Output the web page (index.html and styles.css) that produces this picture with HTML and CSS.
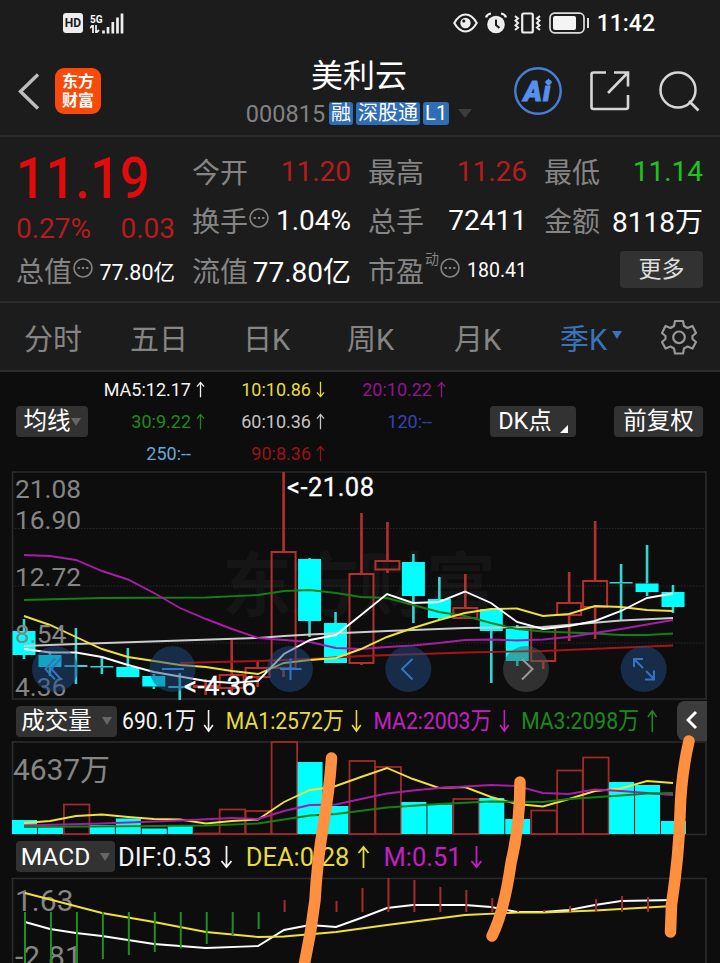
FILE: index.html
```html
<!DOCTYPE html>
<html lang="zh-CN">
<head>
  <meta charset="UTF-8">
  <meta name="viewport" content="width=device-width, initial-scale=1.0">
  <title>美利云 000815</title>
  <link rel="stylesheet" href="styles.css">
</head>
<body>
  <svg class="defs" width="0" height="0">
    <symbol id="up" viewBox="0 0 12 24"><path d="M6 23V2M1 8L6 2L11 8" fill="none" stroke="currentColor" stroke-width="1.8"/></symbol>
    <symbol id="down" viewBox="0 0 12 24"><path d="M6 1V22M1 16L6 22L11 16" fill="none" stroke="currentColor" stroke-width="1.8"/></symbol>
    <symbol id="dots" viewBox="0 0 20 20"><circle cx="10" cy="10" r="9" fill="none" stroke="currentColor" stroke-width="1.6"/><path d="M4.6 10h2.2M8.9 10h2.2M13.2 10h2.2" stroke="currentColor" stroke-width="2"/></symbol>
  </svg>

  <div class="screen">
    <div class="status">
      <span class="hd">HD</span>
      <div class="net">
        <span>5G</span>
        <svg width="10" height="8" viewBox="0 0 10 8"><path d="M0 3L3 0V8M6 0V8L9 5" fill="none" stroke="#eee" stroke-width="1.8"/></svg>
      </div>
      <svg class="signal" width="22" height="21" viewBox="0 0 22 21"><path d="M1.5 17.5V20.5M6 14V20.5M10.8 9V20.5M15.5 4.5V20.5M20 0.5V20.5" stroke="#eee" stroke-width="2.7"/></svg>
      <div class="status-right">
        <svg width="25" height="20" viewBox="0 0 25 20"><path d="M1.3 10Q6 1.5 12.5 1.5T23.7 10Q19 18.5 12.5 18.5T1.3 10Z" fill="none" stroke="#eee" stroke-width="2.1"/><circle cx="12.5" cy="10" r="5.2" fill="#eee"/><circle cx="10.8" cy="8" r="1.6" fill="#1c1c1c"/></svg>
        <svg width="22" height="22" viewBox="0 0 22 22"><circle cx="11" cy="12.5" r="8.8" fill="#eee"/><path d="M11 7.5V13L14.5 16" fill="none" stroke="#1c1c1c" stroke-width="2"/><path d="M1 5.5Q2 2 6 1.5M21 5.5Q20 2 16 1.5" fill="none" stroke="#eee" stroke-width="2.2"/></svg>
        <svg width="27" height="22" viewBox="0 0 27 22"><rect x="8.2" y="1.5" width="10.6" height="19" rx="1.5" fill="none" stroke="#eee" stroke-width="2.2"/><path d="M1 4L4 6.5L1.5 8.5L4 11L1.5 13.5L4 15.5L1 18M26 4L23 6.5L25.5 8.5L23 11L25.5 13.5L23 15.5L26 18" fill="none" stroke="#eee" stroke-width="2"/></svg>
        <svg class="battery" width="41" height="22" viewBox="0 0 41 22"><rect x="1" y="1.2" width="34" height="19.6" rx="4.5" fill="none" stroke="#ddd" stroke-width="1.7"/><rect x="4" y="4" width="23" height="14" rx="2" fill="#f4f4f4"/><path d="M39 6V16" stroke="#ddd" stroke-width="2"/></svg>
        <span class="clock">11:42</span>
      </div>
    </div>

    <header class="header">
      <svg class="back" width="22" height="37" viewBox="0 0 22 37"><path d="M20 1.5L2.5 18.5L20 35.5" fill="none" stroke="#bdbdbd" stroke-width="3.4"/></svg>
      <div class="logo">东方<br>财富</div>
      <div class="title">
        <h1>美利云</h1>
        <div class="code">
          <span class="num">000815</span>
          <span class="tag">融</span>
          <span class="tag">深股通</span>
          <span class="tag">L1</span>
          <i class="tri"></i>
        </div>
      </div>
      <div class="ai">
        <svg width="48" height="48" viewBox="0 0 48 48">
          <circle cx="24" cy="24" r="22.7" fill="none" stroke="#477fd6" stroke-width="2.400"/>
          <text x="9.500" y="33.500" textLength="27">Ai</text>
          <path d="M34.500 11L35.700 14L38.500 15L35.700 16.200L34.500 19L33.300 16.200L30.500 15L33.300 14Z" fill="#5590ee"/>
        </svg>
      </div>
      <svg class="share" width="40" height="40" viewBox="0 0 40 40"><path d="M16 1.5H3.5Q1.5 1.5 1.5 3.5V36Q1.5 38 3.5 38H36Q38 38 38 36V24M24 1.5H38V15.500M37.500 2L18 22" fill="none" stroke="#d6d6d6" stroke-width="2.600"/></svg>
      <svg class="search" width="41" height="41" viewBox="0 0 41 41"><circle cx="19" cy="19" r="17.500" fill="none" stroke="#d6d6d6" stroke-width="2.500"/><path d="M30 30L39.500 39.500" stroke="#d6d6d6" stroke-width="2.600"/></svg>
    </header>

    <section class="quote">
      <div class="price">11.19</div>
      <div class="pair change"><span>0.27%</span><span>0.03</span></div>
      <div class="pair cell-open"><label>今开</label><span class="red">11.20</span></div>
      <div class="pair"><label>最高</label><span class="red">11.26</span></div>
      <div class="pair"><label>最低</label><span class="lime">11.14</span></div>
      <div class="pair cell-turn"><label>换手<svg class="info"><use href="#dots"/></svg></label><span>1.04%</span></div>
      <div class="pair"><label>总手</label><span>72411</span></div>
      <div class="pair"><label>金额</label><span>8118万</span></div>
      <div class="pair"><label>总值<svg class="info"><use href="#dots"/></svg></label><span class="mid">77.80亿</span></div>
      <div class="pair"><label>流值</label><span>77.80亿</span></div>
      <div class="pair"><label>市盈<sup>动</sup><svg class="info"><use href="#dots"/></svg></label><span class="small">180.41</span></div>
      <button class="more">更多</button>
    </section>

    <nav class="tabs">
      <span>分时</span>
      <span>五日</span>
      <span>日K</span>
      <span>周K</span>
      <span>月K</span>
      <span class="active">季K<i class="tri"></i></span>
      <svg class="gear" width="36" height="36" viewBox="0 0 36 36"><path d="M14 2H22L23 7L26.500 9L31.500 7L35 14L31.500 17V20L35 23L31.500 29.500L26.500 27.500L23 29.500L22 34.500H14L13 29.500L9.500 27.500L4.500 29.500L1 23L4.500 20V17L1 14L4.500 7L9.500 9L13 7Z" fill="none" stroke="#98989a" stroke-width="2.200" stroke-linejoin="round"/><circle cx="18" cy="18.300" r="5.800" fill="none" stroke="#98989a" stroke-width="2.200"/></svg>
    </nav>

    <section class="averages">
      <button class="chip">均线<i class="tri"></i></button>
      <div class="ma-grid">
        <span class="white">MA5:12.17<svg><use href="#up"/></svg></span>
        <span class="yellow">10:10.86<svg><use href="#down"/></svg></span>
        <span class="purple">20:10.22<svg><use href="#up"/></svg></span>
        <span class="green">30:9.22<svg><use href="#up"/></svg></span>
        <span class="grey">60:10.36<svg><use href="#up"/></svg></span>
        <span class="blue flat">120:--</span>
        <span class="sky flat">250:--</span>
        <span class="darkred">90:8.36<svg><use href="#up"/></svg></span>
      </div>
      <button class="chip dk">DK点<i></i></button>
      <button class="chip">前复权</button>
    </section>

    <svg class="chart" id="kline" width="720" height="230" viewBox="0 471 720 230">
      <text class="watermark" x="222" y="611" textLength="274">东方财富</text>
      <path class="frame" d="M12.500 472H706V699H12.500Z"/>
      <path class="grid" d="M12 528.500H706M12 586H706M12 643H706"/>
      <g id="candles"></g>
      <polyline class="l-red" points="180,663 258,661 310,659 361,656 465,652.500 543,651 673,645.500"/>
      <polyline class="l-grey" points="24,646 76,644 258,638 284,636 310,634.500 387,631 465,628 543,627 621,620.500 673,618"/>
      <polyline class="l-green" points="24,600 102,598 206,597.500 258,595 284,591 310,590 336,593 361,597 387,598 413,605 439,612 465,616 491,623 517,629 543,631.500 595,633.500 621,635 647,635 673,633.500"/>
      <polyline class="l-purple" points="24,555 50,556 76,560 102,571 128,579.500 154,593 180,608 206,619 232,629 258,638 284,640 310,642 336,648 361,649 387,647 413,645.500 439,643 465,640 491,639.500 517,640.500 543,639.500 569,637 621,629 673,620"/>
      <polyline class="l-yellow" points="24,616 50,625 76,637 102,649 128,657 154,661 180,665 206,667 232,671 258,674 284,663 310,660 336,658 361,649 387,637 413,628 439,620 465,613 491,609 517,608.500 543,616 569,614 595,606 621,607 647,610 673,611"/>
      <polyline class="l-white" points="24,649 50,652.500 76,652.500 102,657 128,665 154,672 180,676.500 206,681 232,683 258,681 284,654 310,640 336,635 361,615 387,594 413,603 439,602 465,591.500 491,603 517,622 543,629 569,626 595,621 621,611 647,598 673,593.500"/>
      <g class="scale">
        <text x="15" y="498">21.08</text>
        <text x="15" y="529">16.90</text>
        <text x="15" y="586">12.72</text>
        <text x="15" y="643">8.54</text>
        <text x="15" y="696">4.36</text>
      </g>
      <g class="pads">
        <circle cx="55" cy="669" r="23"/>
        <circle cx="172.500" cy="669" r="23"/>
        <circle cx="290" cy="669" r="23"/>
        <circle cx="408.300" cy="669" r="23"/>
        <circle class="off" cx="526" cy="669" r="23"/>
        <circle cx="643.700" cy="669" r="23"/>
        <path d="M55 658.500L45.500 669L55 679.500M61 658.500L51.500 669L61 679.500M162 669H184M280 669H301.500M290.500 658.500V680M412.500 659L402 669L412.500 679.500"/>
        <path d="M634 667V659H643M634 659L643 668M646 671L654 679M654 670.500V679.500H645"/>
        <path class="off-line" d="M522 659L532.500 669L522 679.500"/>
      </g>
      <text class="mark" x="287" y="496" textLength="87">&lt;-21.08</text>
      <text class="mark" x="184" y="695" textLength="72">&lt;-4.36</text>
    </svg>

    <div class="bar volume-bar">
      <button class="chip">成交量<i class="tri"></i></button>
      <div class="readout narrow">
        <span class="white">690.1万<svg><use href="#down"/></svg></span>
        <span class="yellow">MA1:2572万<svg><use href="#down"/></svg></span>
        <span class="purple2">MA2:2003万<svg><use href="#down"/></svg></span>
        <span class="green">MA3:2098万<svg><use href="#up"/></svg></span>
      </div>
      <button class="collapse"><svg width="12" height="20" viewBox="0 0 12 20"><path d="M10 2L2 10L10 18" fill="none" stroke="#fff" stroke-width="3"/></svg></button>
    </div>

    <svg class="chart" id="volume" width="720" height="95" viewBox="0 741 720 95">
      <path class="frame" d="M12.500 742H706V834.500H12.500Z"/>
      <g id="bars"></g>
      <polyline class="l-yellow" points="24,823 50,821 76,816 102,814.500 128,817 154,819 180,819.500 206,823.500 232,821 258,819.500 284,802 310,790 333,787 361,777 387,768 413,779 439,788 465,787 491,797 517,804 543,806.500 569,799 595,791 621,788.500 647,781 673,783"/>
      <polyline class="l-purple" points="24,825.500 102,823.500 180,820.500 232,818 258,819 284,811 310,805 336,804.500 361,799 387,793.500 413,790.500 439,788 491,785 517,786 543,793 569,794 595,789.500 621,791 647,793 673,795"/>
      <polyline class="l-green" points="24,827 154,826 206,825.500 258,823.500 310,815.500 336,814 387,807.500 439,804 491,801.500 543,802 569,799 621,795.500 647,793.500 673,793"/>
      <text class="scale big" x="13" y="780" textLength="97">4637万</text>
    </svg>

    <div class="bar macd-bar">
      <button class="chip">MACD<i class="tri"></i></button>
      <div class="readout">
        <span class="white">DIF:0.53<svg><use href="#down"/></svg></span>
        <span class="yellow">DEA:0.28<svg><use href="#up"/></svg></span>
        <span class="purple2">M:0.51<svg><use href="#down"/></svg></span>
      </div>
    </div>

    <svg class="chart" id="macd" width="720" height="86" viewBox="0 877 720 86">
      <path class="frame" d="M12.500 970V878.500H706V970"/>
      <text class="scale big" x="15" y="911">1.63</text>
      <text class="scale big" x="15" y="967">-2.81</text>
      <polyline class="l-white" points="25,922 50,929 76,933 102,936 128,940 154,944 206,948 258,946 284,930 310,925 336,927 361,918 387,908 413,905 465,905 491,907 517,912 543,912 569,910 595,905 621,901 673,900"/>
      <polyline class="l-yellow" points="25,893 102,913 154,922 206,932 258,937 284,936.500 336,932 387,925 465,915 517,912.500 543,912.500 595,910.500 673,906"/>
      <g id="sticks"></g>
    </svg>

    <svg class="strokes" width="720" height="963" viewBox="0 0 720 963">
      <path d="M331.500 758Q330 785 323.500 824T315 900Q311 935 303 970"/>
      <path d="M520 782Q520 825 511 863Q504 912 492 936"/>
      <path d="M689 741Q681 775 680 815T671.500 905L670.500 932"/>
    </svg>
  </div>

  <script>
    const STEP = 25.96;
    const RED = '#b5302c';
    const CYAN = '#00ffff';
    const WICK = '#35d5d6';

    // [rising, high, top, bottom, low]
    const candles = [
      [0, 619, 631, 655, 659], [0, 651, 655, 667, 676], [0, 628, 665, 667, 684],
      [0, 657, 666, 667.5, 674], [0, 648, 667, 677, 677], [0, 674, 676, 686.5, 689],
      [0, 673, 686, 688, 700], [1, 679, 686, 687, 695], [1, 640, 675, 688, 693],
      [1, 662, 668, 677, 687], [1, 472, 552, 668, 677], [0, 558, 559, 621, 637],
      [0, 612, 623, 663, 663], [1, 513, 574, 663, 665], [1, 522, 561, 569.5, 573],
      [0, 554, 562, 596, 623], [0, 577, 599, 618, 620], [1, 574, 608, 618, 618],
      [0, 608, 609, 631, 683], [0, 625, 629, 661, 666], [1, 626, 628, 661, 669],
      [1, 572, 603, 615, 641], [1, 521, 581, 607, 639], [0, 564, 582, 583.5, 621],
      [0, 545, 583.5, 592, 596], [0, 585, 592, 607, 613]
    ];

    document.getElementById('candles').innerHTML = candles.map(([up, high, top, bottom, low], i) => {
      const x = 24 + i * STEP;
      const wick = `<path d="M${x} ${high}V${top}M${x} ${bottom}V${low}" stroke="${up ? RED : WICK}" stroke-width="2.6"/>`;
      if (up) {
        return wick + `<rect x="${x - 12}" y="${top}" width="24" height="${bottom - top}" fill="none" stroke="${RED}" stroke-width="2"/>`;
      }
      return wick + `<rect x="${x - 11.5}" y="${top}" width="23" height="${bottom - top}" fill="${bottom - top < 3 ? WICK : CYAN}"/>`;
    }).join('');

    // [rising, top]
    const volumes = [
      [0, 820], [0, 826], [1, 804.5], [0, 825], [0, 818.5], [0, 828.5], [0, 825], [1, 833.5], [1, 809.5],
      [1, 811], [1, 742], [0, 762], [0, 806], [1, 761], [1, 767], [0, 802], [0, 804.5], [1, 799],
      [0, 798], [0, 819], [1, 810.5], [1, 770.5], [1, 757.5], [0, 782], [0, 785], [0, 821]
    ];

    document.getElementById('bars').innerHTML = volumes.map(([up, top], i) => {
      const x = 12 + i * STEP;
      return up
        ? `<rect x="${x}" y="${top}" width="25.500" height="${834 - top}" fill="none" stroke="#a02a28" stroke-width="1.8"/>`
        : `<rect x="${x}" y="${top}" width="25" height="${834 - top}" fill="${CYAN}"/>`;
    }).join('');

    const sticks = [970, 970, 970, 959, 955, 952, 948.5, 944, 935, 929, 900, 912, 901,
      888, 878, 880, 887, 890, 898, 910.5, 910, 906, 899, 896, 897];

    document.getElementById('sticks').innerHTML = sticks.map((y, i) =>
      `<path d="M${25 + i * STEP} 912V${y}" stroke="${y > 912 ? '#1f8f1f' : '#a62c2a'}" stroke-width="2"/>`
    ).join('');
  </script>
</body>
</html>
```

FILE: styles.css
```css
* {
  box-sizing: border-box;
}

body {
  margin: 0;
  background: #0d0d0d;
  color: #fff;
  font-family: Roboto, "Noto Sans CJK SC", sans-serif;
}

button {
  border: none;
  padding: 0;
  color: #fff;
  font-family: inherit;
}

h1 {
  margin: 0;
  font-weight: 400;
}

.defs {
  position: absolute;
}

.screen {
  position: relative;
  width: 720px;
  height: 963px;
  overflow: hidden;
}

.tri {
  display: inline-block;
  border: 5px solid transparent;
  border-top: 8px solid #666;
  border-bottom: none;
}

/* status bar */
.status {
  display: flex;
  align-items: center;
  height: 46px;
  padding: 0 64px 0 63px;
  background: #1c1c1c;
}

.hd {
  width: 20px;
  height: 20px;
  border-radius: 3px;
  background: #eee;
  color: #1c1c1c;
  font-size: 12px;
  font-weight: 700;
  line-height: 20px;
  text-align: center;
}

.net {
  display: flex;
  flex-direction: column;
  width: 12px;
  margin-left: 7px;
  font-size: 10px;
  font-weight: 700;
  line-height: 11px;
}

.status-right {
  display: flex;
  align-items: center;
  gap: 7px;
  margin-left: auto;
}

.battery {
  margin-left: 1px;
}

.clock {
  margin-right: 1px;
  font-size: 23px;
  font-weight: 500;
}

/* header */
.header {
  display: flex;
  align-items: center;
  height: 91px;
  padding: 0 20px 0 18px;
  border-bottom: 2px solid #2c2c2c;
  background: #1c1c1c;
}

.back,
.logo,
.ai,
.share,
.search {
  margin-top: 1px;
}

.logo {
  width: 46px;
  height: 46px;
  margin-left: 15px;
  padding-top: 3px;
  border-radius: 9px;
  background: #fa4a0a;
  font-family: "Noto Sans CJK SC", sans-serif;
  font-size: 16px;
  font-weight: 700;
  line-height: 19px;
  text-align: center;
}

.title {
  display: flex;
  flex-direction: column;
  align-items: center;
  width: 228px;
  margin-left: 144px;
}

.title h1 {
  height: 44px;
  font-size: 32px;
  line-height: 48px;
}

.code {
  display: flex;
  align-items: center;
  gap: 3px;
  height: 34px;
  padding-top: 2px;
}

.num {
  margin-right: 1px;
  color: #828282;
  font-size: 23.5px;
}

.tag {
  height: 23px;
  padding: 0 2px;
  border-radius: 3px;
  background: #2f6db5;
  font-size: 20px;
  line-height: 23px;
}

.code .tri {
  margin-left: 6px;
  border-width: 9px 7px 0;
  border-top-color: #3c3c3c;
}

.ai {
  height: 48px;
  margin-left: 41px;
}

.ai text {
  fill: #5590ee;
  stroke: #5590ee;
  stroke-width: 0.8;
  font-family: Roboto, sans-serif;
  font-size: 28px;
  font-style: italic;
  font-weight: 900;
}

.share {
  margin-left: 28px;
}

.search {
  margin-left: auto;
}

/* quote */
.quote {
  display: grid;
  grid-template-columns: repeat(4, 159px);
  grid-template-rows: 49px 50px 50px;
  column-gap: 17px;
  height: 166px;
  padding: 9px 0 0 16px;
  border-bottom: 2px solid #2c2c2c;
  background: #1c1c1c;
}

.pair {
  display: flex;
  align-items: center;
  justify-content: space-between;
  height: 50px;
  font-size: 28px;
  white-space: nowrap;
}

.pair label {
  display: flex;
  align-items: center;
  margin-top: -1px;
  color: #858585;
}

.pair sup {
  margin: -24px 0 0 1px;
  font-size: 14px;
}

.info {
  width: 20px;
  height: 20px;
  margin: -3px 0 0 1px;
}

.price {
  grid-row: 1;
  height: 64px;
  color: #e00c0c;
  font-size: 57px;
  font-weight: 500;
  line-height: 66px;
  transform: scaleX(0.92);
  transform-origin: left;
}

.change {
  grid-row: 2;
  grid-column: 1;
  height: 66px;
  color: #b51c1c;
}

.cell-open,
.cell-turn {
  grid-column: 2;
}

.red {
  color: #b51c1c;
}

.lime {
  color: #1fc41f;
}

.mid {
  font-size: 21.5px;
}

.small {
  font-size: 19.5px;
}

.more {
  justify-self: end;
  align-self: center;
  width: 83px;
  height: 37px;
  margin-top: -2px;
  border-radius: 4px;
  background: #323232;
  color: #ddd;
  font-size: 23px;
  line-height: 37px;
}

/* period tabs */
.tabs {
  display: grid;
  grid-template-columns: 106px 113px 104px 107px 106px 101px 36px;
  align-items: center;
  height: 69px;
  padding-left: 24px;
  border-bottom: 2px solid #2c2c2c;
  background: #1c1c1c;
  color: #858585;
  font-size: 29px;
}

.active {
  display: flex;
  align-items: center;
  color: #3a74b8;
}

.active .tri {
  margin: -4px 0 0 5px;
  border-top-color: #3a74b8;
}

/* moving averages */
.averages {
  display: flex;
  align-items: center;
  height: 99px;
  padding: 0 17px 0 16px;
}

.chip {
  display: flex;
  align-items: center;
  justify-content: center;
  height: 31px;
  border-radius: 4px;
  background: #323232;
  font-size: 23.5px;
  line-height: 31px;
}

.averages .chip {
  width: 72px;
}

.ma-grid {
  display: grid;
  grid-template-columns: 118px 120px 121px;
  grid-auto-rows: 32px;
  font-size: 18px;
}

.ma-grid span {
  display: flex;
  align-items: center;
  justify-content: flex-end;
}

.ma-grid svg {
  width: 11px;
  height: 17px;
  margin-left: 4px;
}

.ma-grid .flat {
  padding-right: 15px;
}

.averages .dk {
  width: 86px;
  margin-left: 43px;
  gap: 8px;
}

.dk i {
  align-self: flex-end;
  margin-bottom: 4px;
  border-bottom: 8px solid #fff;
  border-left: 8px solid transparent;
}

.averages .chip:last-child {
  width: 89px;
  margin-left: auto;
}

.white {
  color: #f4f4f4;
}

.yellow {
  color: #e6dc3c;
}

.purple {
  color: #93158f;
}

.purple2 {
  color: #c41fc4;
}

.green {
  color: #1d891d;
}

.grey {
  color: #c4c4c4;
}

.blue {
  color: #3345b5;
}

.sky {
  color: #63a9dd;
}

.darkred {
  color: #991414;
}

/* charts */
.chart {
  display: block;
}

.chart polyline {
  fill: none;
  stroke-width: 1.9;
}

.frame {
  fill: none;
  stroke: #2c2c2c;
  stroke-width: 1.6;
}

.grid {
  stroke: #2b2b2b;
  stroke-dasharray: 1.5 1.5;
}

.l-white {
  stroke: #fff;
}

.l-yellow {
  stroke: #f0e03c;
}

.l-purple {
  stroke: #a81da8;
}

.l-green {
  stroke: #148014;
}

.l-grey {
  stroke: #ccc;
}

.l-red {
  stroke: #a81414;
}

.scale {
  fill: #858585;
  font-size: 26.3px;
}

.big {
  font-size: 30px;
}

.mark {
  fill: #fff;
  stroke: #fff;
  stroke-width: 0.3;
  font-size: 25.5px;
}

.watermark {
  fill: #151515;
  font-size: 70px;
  font-weight: 700;
}

.pads circle {
  fill: #204c83;
  fill-opacity: 0.5;
}

.pads .off {
  fill: #555;
}

.pads path {
  fill: none;
  stroke: #3475c2;
  stroke-width: 2;
}

.pads .off-line {
  stroke: #999;
}

/* indicator bars */
.bar {
  display: flex;
  align-items: center;
  padding-left: 16px;
}

.volume-bar {
  height: 40px;
}

.macd-bar {
  height: 41px;
}

.bar .chip {
  gap: 10px;
  width: 101px;
}

.macd-bar .chip {
  width: 99px;
  font-size: 24.5px;
}

.readout {
  display: flex;
  gap: 13px;
  margin-left: 3px;
  font-size: 25.5px;
  white-space: nowrap;
}

.readout span {
  display: flex;
  align-items: center;
}

.readout svg {
  width: 13px;
  height: 24px;
  margin-left: 8px;
}

.narrow {
  gap: 13px;
  width: 560px;
  margin: -5px 0 0 5px;
  font-size: 24.3px;
  transform: scaleX(0.87);
  transform-origin: left;
}

.narrow svg {
  margin-top: 5px;
}

.collapse {
  width: 30px;
  height: 40px;
  margin-left: -5px;
  border-radius: 8px 0 0 8px;
  background: #3c3c3c;
}

/* hand-drawn marker */
.strokes {
  position: absolute;
  inset: 0;
}

.strokes path {
  fill: none;
  stroke: #ff903f;
  stroke-width: 11.5;
  stroke-linecap: round;
}
```
